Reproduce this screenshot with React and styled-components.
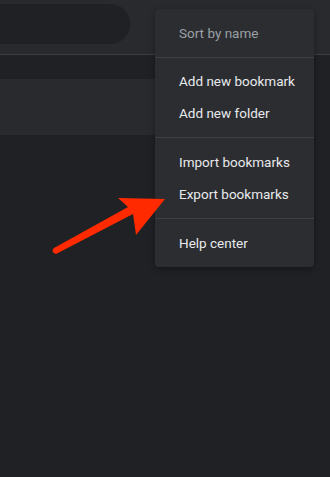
import React from 'react';
import styled, { createGlobalStyle } from 'styled-components';

const GlobalStyle = createGlobalStyle`
  html, body {
    margin: 0;
    padding: 0;
    background: #202124;
  }
  body {
    font-family: Roboto, "Liberation Sans", sans-serif;
  }
`;

const Page = styled.div`
  position: relative;
  width: 330px;
  height: 477px;
  overflow: hidden;
  background: #202124;
`;

const TopBar = styled.div`
  height: 55px;
  box-sizing: border-box;
  display: flex;
  align-items: center;
  background: #292a2d;
  border-bottom: 1px solid #3c3d40;
`;

const SearchPill = styled.div`
  width: 200px;
  height: 40px;
  margin-left: -70px;
  margin-top: -6px;
  border-radius: 20px;
  background: #202124;
`;

const Content = styled.div`
  padding-top: 24px;
`;

const Card = styled.div`
  width: 305px;
  height: 56px;
  background: #292a2d;
`;

const Menu = styled.div`
  position: absolute;
  top: 9px;
  left: 155px;
  width: 159px;
  padding: 8px 0;
  background: #2c2d30;
  border-radius: 4px;
  box-shadow: 0 2px 6px rgba(0, 0, 0, 0.35);
`;

const Item = styled.div`
  height: 32px;
  display: flex;
  align-items: center;
  padding-left: 24px;
  font-size: 13.5px;
  color: ${(p) => (p.disabled ? '#9aa0a6' : '#e8eaed')};
  white-space: nowrap;
`;

const Separator = styled.div`
  height: 1px;
  margin: ${(p) => (p.tight ? '8px 0 7px' : '8px 0')};
  background: #3f4044;
`;

const Arrow = styled.svg`
  position: absolute;
  left: 0;
  top: 0;
  pointer-events: none;
`;

export default function App() {
  return (
    <Page>
      <GlobalStyle />
      <TopBar>
        <SearchPill />
      </TopBar>
      <Content>
        <Card />
      </Content>
      <Menu>
        <Item disabled>Sort by name</Item>
        <Separator tight />
        <Item>Add new bookmark</Item>
        <Item>Add new folder</Item>
        <Separator />
        <Item>Import bookmarks</Item>
        <Item>Export bookmarks</Item>
        <Separator />
        <Item>Help center</Item>
      </Menu>
      <Arrow width="330" height="477" viewBox="0 0 330 477">
        <path
          d="M165 199 L118 198 L128 207 L54 248 Q51 251 54 253 L56 254 L133 214 L136 235 Z"
          fill="#ff2a00"
        />
      </Arrow>
    </Page>
  );
}
